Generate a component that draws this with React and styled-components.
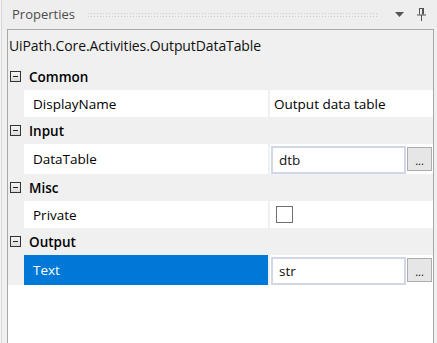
import React from "react";
import styled, { createGlobalStyle } from "styled-components";

const GlobalStyle = createGlobalStyle`
  html, body {
    margin: 0;
    padding: 0;
    background: #f5f5f5;
  }
  body {
    font-family: "Open Sans", "Noto Sans", sans-serif;
    font-size: 13px;
    color: #000;
  }
`;

const Window = styled.div`
  width: 437px;
  height: 343px;
  box-sizing: border-box;
  border-left: 1px solid #d8d8d8;
  margin-left: 1px;
  background: #f0f0f0;
  display: flex;
  flex-direction: column;
  overflow: hidden;
`;

const TitleBar = styled.div`
  height: 29px;
  display: flex;
  align-items: center;
  padding: 0 10px 0 10px;
  gap: 8px;
  box-sizing: border-box;
  background: #eeeeef;
`;

const Title = styled.span`
  color: #4d4d4d;
  font-size: 13px;
  padding-bottom: 1px;
`;

const Grip = styled.div`
  flex: 1;
  height: 5px;
  margin: 0 6px 0 4px;
  background-image: radial-gradient(circle, #cacaca 0.7px, transparent 0.9px);
  background-size: 3px 3px;
`;

const IconButton = styled.div`
  width: 14px;
  height: 16px;
  display: flex;
  align-items: center;
  justify-content: center;
`;

const Panel = styled.div`
  flex: 1;
  margin: 0 4px 0 5px;
  border: 1px solid #a8a8a8;
  border-bottom: none;
  display: flex;
  flex-direction: column;
  background: #f0f0f0;
`;

const ActivityName = styled.div`
  height: 33px;
  padding: 6px 0 0 1px;
  box-sizing: border-box;
  font-size: 14px;
  letter-spacing: -0.1px;
  color: #111;
`;

const CategoryRow = styled.div`
  height: 27px;
  display: flex;
  align-items: center;
  padding-left: 2px;
  gap: 8px;
  font-weight: 600;
  font-size: 13.5px;
`;

const Expander = styled.span`
  width: 9px;
  height: 9px;
  border: 1px solid #333;
  background: linear-gradient(#f4f4f4, #dcdcdc);
  position: relative;
  &::after {
    content: "";
    position: absolute;
    left: 2px;
    right: 2px;
    top: 4px;
    height: 1px;
    background: #222;
  }
`;

const PropRow = styled.div`
  height: ${(p) => p.$h}px;
  display: grid;
  grid-template-columns: 244px 1fr;
  column-gap: 2px;
  padding-left: 16px;
`;

const NameCell = styled.div`
  display: flex;
  align-items: center;
  padding-left: 9px;
  font-size: 13.5px;
  background: ${(p) => (p.$selected ? "#0078d7" : "#fff")};
  color: ${(p) => (p.$selected ? "#fff" : "#000")};
`;

const ValueCell = styled.div`
  background: #fff;
  display: flex;
  align-items: ${(p) => (p.$top ? "flex-start" : "center")};
  padding: ${(p) => (p.$top ? "2px 1px 0 1px" : "0 0 0 4px")};
  font-size: 13.5px;
`;

const TextBox = styled.div`
  flex: 1;
  height: 28px;
  box-sizing: border-box;
  border: 2px solid #d0d8e8;
  display: flex;
  align-items: center;
  padding-left: 6px;
  font-size: 13.5px;
  color: #111;
`;

const EllipsisButton = styled.div`
  width: 25px;
  height: 24px;
  margin: 1px 0 0 1px;
  box-sizing: border-box;
  border: 1px solid #adadad;
  background: #e6e6e6;
  font-size: 11px;
  display: flex;
  align-items: flex-end;
  justify-content: center;
  padding-bottom: 4px;
  line-height: 1;
`;

const CheckBox = styled.span`
  width: 17px;
  height: 17px;
  box-sizing: border-box;
  border: 1px solid #707070;
  background: #fff;
  margin-left: 2px;
`;

const Filler = styled.div`
  flex: 1;
  background: #fff;
`;

const data = [
  {
    category: "Common",
    props: [{ name: "DisplayName", value: "Output data table", kind: "text" }],
  },
  {
    category: "Input",
    props: [{ name: "DataTable", value: "dtb", kind: "box" }],
  },
  {
    category: "Misc",
    props: [{ name: "Private", kind: "check" }],
  },
  {
    category: "Output",
    props: [{ name: "Text", value: "str", kind: "box", selected: true }],
  },
];

function Property({ prop }) {
  const boxed = prop.kind === "box";
  return (
    <PropRow $h={boxed ? 30 : 27}>
      <NameCell $selected={prop.selected}>{prop.name}</NameCell>
      <ValueCell $top={boxed}>
        {prop.kind === "text" && prop.value}
        {prop.kind === "check" && <CheckBox />}
        {boxed && (
          <>
            <TextBox>{prop.value}</TextBox>
            <EllipsisButton>...</EllipsisButton>
          </>
        )}
      </ValueCell>
    </PropRow>
  );
}

export default function App() {
  return (
    <>
      <GlobalStyle />
      <Window>
        <TitleBar>
          <Title>Properties</Title>
          <Grip />
          <IconButton>
            <svg width="9" height="5" viewBox="0 0 9 5">
              <path d="M0 0h9L4.5 5z" fill="#555" />
            </svg>
          </IconButton>
          <IconButton>
            <svg width="9" height="13" viewBox="0 0 9 13">
              <path
                d="M2 0.5h5M2.5 0.5v6M6.5 0.5v6M5.5 0.5v6M0 7h9M4.5 7v6"
                stroke="#555"
                strokeWidth="1"
                fill="none"
              />
            </svg>
          </IconButton>
        </TitleBar>
        <Panel>
          <ActivityName>UiPath.Core.Activities.OutputDataTable</ActivityName>
          {data.map((group) => (
            <React.Fragment key={group.category}>
              <CategoryRow>
                <Expander />
                {group.category}
              </CategoryRow>
              {group.props.map((p) => (
                <Property key={p.name} prop={p} />
              ))}
            </React.Fragment>
          ))}
          <Filler />
        </Panel>
      </Window>
    </>
  );
}
